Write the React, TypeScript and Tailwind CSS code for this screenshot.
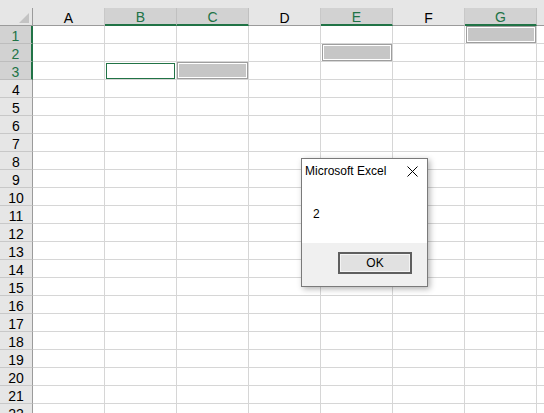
import React from "react";

const COLS = ["A", "B", "C", "D", "E", "F", "G", "H"];
const SEL_COLS = ["B", "C", "E", "G"];
const ROWS = Array.from({ length: 22 }, (_, i) => i + 1);

function Fill() {
  return (
    <div className="flex-1 self-stretch border border-[#9e9e9e] bg-[#c6c6c6] shadow-[inset_0_0_0_1px_#ffffff]" />
  );
}

function Cell({ col, row }: { col: string; row: number }) {
  let content: React.ReactNode = null;
  let pad = "";
  if ((col === "G" && row === 1) || (col === "E" && row === 2)) {
    content = <Fill />;
    pad = "pl-[1px]";
  } else if (col === "C" && row === 3) {
    content = <Fill />;
  } else if (col === "B" && row === 3) {
    content = <div className="flex-1 self-stretch border border-[#217346] bg-white ml-[1px] mt-[1px] mr-[1px]" />;
  }
  return (
    <div className={`w-[72px] h-[18px] shrink-0 flex border-r border-b border-[#d6d6d6] ${pad}`}>{content}</div>
  );
}

export default function App() {
  return (
    <div
      className="relative w-[544px] h-[413px] overflow-hidden bg-white text-black"
      style={{ fontFamily: '"Liberation Sans", Arial, sans-serif' }}
    >
      <div className="h-[8px] bg-[#e6e6e6]" />
      {/* Header row */}
      <div className="flex h-[18px]">
        <div className="w-[33px] shrink-0 h-[18px] bg-[#e6e6e6] border-b border-r border-[#9b9b9b] relative">
          <svg className="absolute right-[3px] bottom-[2px]" width="10" height="10" viewBox="0 0 10 10">
            <polygon points="10,0 10,10 0,10" fill="#c3c3c3" />
          </svg>
        </div>
        {COLS.map((c) => {
          const sel = SEL_COLS.includes(c);
          return (
            <div
              key={c}
              className={`w-[72px] shrink-0 h-[18px] flex items-center justify-center pt-[2px] text-[14px] leading-none border-r ${
                sel
                  ? "bg-[#d2d2d2] text-[#217346] border-b-2 border-b-[#217346] border-r-[#c0c0c0]"
                  : "bg-[#e6e6e6] text-black border-b border-b-[#9b9b9b] border-r-[#c8c8c8]"
              }`}
            >
              {c === "H" ? "" : c}
            </div>
          );
        })}
      </div>
      {/* Body rows */}
      {ROWS.map((r) => {
        const sel = r <= 3;
        return (
          <div key={r} className="flex h-[18px]">
            <div
              className={`w-[33px] shrink-0 h-[18px] flex items-center justify-center pt-[2px] text-[14px] leading-none border-b ${
                sel
                  ? "bg-[#d2d2d2] text-[#217346] border-r-2 border-r-[#217346] border-b-[#bdbdbd]"
                  : "bg-[#e6e6e6] text-black border-r border-r-[#9b9b9b] border-b-[#c8c8c8]"
              }`}
            >
              {r}
            </div>
            {COLS.map((c) => (
              <Cell key={c} col={c} row={r} />
            ))}
          </div>
        );
      })}

      {/* Message box */}
      <div className="absolute left-[301px] top-[158px] w-[127px] h-[129px] flex flex-col bg-white border border-[#7a7a7a] shadow-[2px_2px_6px_rgba(0,0,0,0.3)]">
        <div className="flex items-start justify-between pl-[3px] pr-[9px] pt-[5px] h-[30px]">
          <span className="text-[12px] leading-[14px]">Microsoft Excel</span>
          <svg width="11" height="11" viewBox="0 0 11 11" className="mt-[2px]">
            <path d="M0.5 0.5 L10.5 10.5 M10.5 0.5 L0.5 10.5" stroke="#000" strokeWidth="1" fill="none" />
          </svg>
        </div>
        <div className="h-[54px] pl-[11px] pt-[19px] text-[12px] leading-none">2</div>
        <div className="flex-1 bg-[#f0f0f0] flex justify-end items-start pt-[9px] pr-[15px]">
          <div className="w-[74px] h-[22px] border-2 border-[#5f5f5f] bg-[#e1e1e1] flex items-center justify-center text-[12px] leading-none shadow-[inset_0_0_0_1px_#f4f4f4]">
            OK
          </div>
        </div>
      </div>
    </div>
  );
}
